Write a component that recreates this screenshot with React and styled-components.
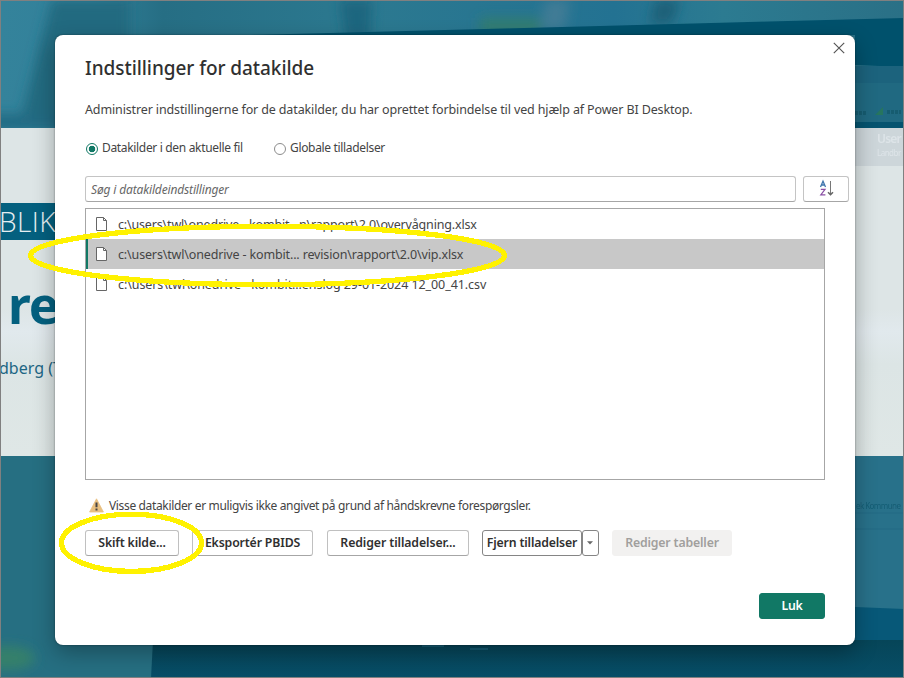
import React from "react";
import styled, { createGlobalStyle } from "styled-components";

const GlobalStyle = createGlobalStyle`
  *, *::before, *::after { box-sizing: border-box; }
  html, body { margin: 0; padding: 0; }
  body { width: 904px; height: 678px; overflow: hidden; font-family: "Noto Sans", "Open Sans", sans-serif; }
  button, input { font-family: inherit; margin: 0; padding: 0; }
`;

const Page = styled.main`
  position: relative;
  width: 904px;
  height: 678px;
  padding: 35px 49px 33px 55px;
  overflow: hidden;
  background: #266f82;
`;

const PageFrame = styled.div`
  position: absolute;
  inset: 0;
  border: 1px solid #808080;
  pointer-events: none;
`;

const Backdrop = styled.div`
  position: absolute;
  inset: 0;
  padding-top: 128px;
`;

const Scenery = styled.svg`
  position: absolute;
  inset: 0;
  display: block;
`;

const Band = styled.section`
  position: relative;
  height: 328px;
  padding-top: 75px;
  background: linear-gradient(180deg, #dde5e6 0%, #dde5e6 55%, #e1e9ed 62%, #dce5e5 72%, #dfe7e6 100%);
`;

const BandPanel = styled.div`
  position: absolute;
  top: 0;
  right: 0;
  display: flex;
  flex-direction: column;
  width: 54px;
  height: 38px;
  padding: 2px 0 0 27px;
  background: #cdd6da;
  color: #dde4e8;
  white-space: nowrap;
  filter: blur(0.6px);
`;

const PanelTitle = styled.span`
  font-size: 12px;
  font-weight: 600;
  line-height: 17px;
  letter-spacing: -0.8px;
`;

const PanelNote = styled.span`
  font-size: 8px;
  line-height: 11px;
  letter-spacing: -0.5px;
`;

const BandTag = styled.div`
  width: 60px;
  height: 37px;
  background: #04607f;
  color: #e6eef1;
  font-family: "Open Sans", sans-serif;
  font-weight: 300;
  font-size: 28px;
  line-height: 36px;
  letter-spacing: 0.4px;
  text-indent: -1px;
  white-space: nowrap;
`;

const BandHeading = styled.div`
  width: 80px;
  height: 70px;
  padding-left: 8px;
  color: #04607f;
  font-weight: 700;
  font-size: 51px;
  line-height: 70px;
  margin-top: 29px;
  letter-spacing: -1px;
`;

const BandName = styled.div`
  width: 80px;
  height: 26px;
  margin-top: 16px;
  color: #1c6684;
  font-size: 16px;
  line-height: 26px;
  letter-spacing: 0px;
  white-space: nowrap;
  text-indent: -1px;
`;

const Dialog = styled.section`
  position: relative;
  display: flex;
  flex-direction: column;
  width: 800px;
  height: 610px;
  padding: 0 30px;
  border-radius: 8px;
  background: #fff;
  color: #444;
  box-shadow: 0 0 2px rgba(0, 0, 0, 0.45), 0 8px 22px rgba(0, 0, 0, 0.3);
`;

const CloseButton = styled.button`
  position: absolute;
  top: 7px;
  right: 10px;
  width: 12px;
  height: 12px;
  border: 0;
  background: none;
  svg { display: block; }
`;

const Title = styled.h1`
  margin: 18px 0 0;
  height: 30px;
  color: #303030;
  font-size: 19px;
  font-weight: 500;
  line-height: 30px;
  letter-spacing: ${(p) => p.$track}px;
  white-space: nowrap;
`;

const Text = styled.span`
  color: #444;
  font-size: ${(p) => (p.$small ? 12 : 12.5)}px;
  line-height: 20px;
  letter-spacing: ${(p) => p.$track || 0}px;
  white-space: nowrap;
`;

const Intro = styled.div`
  display: flex;
  height: 20px;
  margin-top: 17px;
`;

const RadioGroup = styled.div`
  display: flex;
  height: 20px;
  margin-top: 18px;
`;

const Radio = styled.label`
  display: flex;
  width: ${(p) => p.$width}px;
  gap: 4px;
`;

const RadioMark = styled.span`
  width: 12px;
  height: 12px;
  margin: 5px 0 0 1px;
  border: 1px solid ${(p) => (p.$checked ? "#117865" : "#8c8c8c")};
  border-radius: 50%;
  background: ${(p) => (p.$checked ? "radial-gradient(circle, #117865 0 3px, #fff 3.6px)" : "#fff")};
`;

const SearchRow = styled.div`
  display: flex;
  gap: 7px;
  width: 764px;
  height: 26px;
  margin-top: 18px;
`;

const SearchField = styled.div`
  display: flex;
  align-items: center;
  width: 711px;
  padding-left: 5px;
  border: 1px solid #c4c4c4;
  border-bottom-color: #a6a6a6;
  border-radius: 3px;
  color: #666;
  font-size: 12px;
  font-style: italic;
  letter-spacing: ${(p) => p.$track}px;
  white-space: nowrap;
`;

const SortButton = styled.button`
  width: 46px;
  border: 1px solid #c4c4c4;
  border-bottom-color: #a6a6a6;
  border-radius: 3px;
  background: #fff;
  svg { display: block; margin: -2px 0 0 15px; }
`;

const SourceList = styled.ul`
  width: 740px;
  height: 272px;
  margin: 6px 0 0;
  padding: 0;
  list-style: none;
  border: 1px solid #a6a6a6;
`;

const SourceRow = styled.li`
  display: flex;
  align-items: center;
  height: 30px;
  padding-left: 7px;
  border-left: 2px solid ${(p) => (p.$selected ? "#117865" : "transparent")};
  background: ${(p) => (p.$selected ? "#c8c8c8" : "#fff")};
  svg { display: block; flex: none; margin-right: 10px; }
  ${Text} { padding-top: 2px; }
`;

const Warning = styled.div`
  display: flex;
  height: 20px;
  margin-top: 16px;
  padding-left: 4px;
  gap: 5px;
  svg { display: block; margin-top: 2px; }
`;

const Actions = styled.div`
  display: flex;
  height: 26px;
  margin-top: 14px;
`;

const Button = styled.button`
  width: ${(p) => p.$width}px;
  height: 26px;
  margin-right: ${(p) => p.$gap || 0}px;
  border: 1px solid ${(p) => (p.$strong ? "#858585" : "#c0c0c0")};
  border-bottom-color: ${(p) => (p.$strong ? "#858585" : "#a6a6a6")};
  border-radius: 3px;
  background: #fff;
  color: #303030;
  font-size: 12.3px;
  font-weight: 600;
  line-height: 22px;
  letter-spacing: ${(p) => p.$track || 0}px;
  white-space: nowrap;
  text-align: center;

  &:disabled { border-color: #f2f1f0; background: #f2f1f0; color: #a19f9d; }
  svg { display: block; margin: 0 auto; }
`;

const MenuButton = styled(Button)`
  padding: 0 2px 0 0;
`;

const PrimaryButton = styled(Button)`
  border-color: #117865;
  background: #117865;
  color: #fff;
`;

const Footer = styled.footer`
  display: flex;
  justify-content: flex-end;
  margin-top: 37px;
`;

const Annotations = styled.svg`
  position: absolute;
  inset: 0;
  pointer-events: none;
`;

function FileIcon() {
  return (
    <svg width="13" height="16" viewBox="0 0 13 16" fill="#fff" stroke="#666" strokeWidth="1">
      <path d="M1.5 1.5H8.5L11.5 4.5V14.5H1.5Z" />
      <path d="M8.5 1.5V4.5H11.5" fill="none" />
    </svg>
  );
}

function SortIcon() {
  return (
    <svg width="16" height="18" viewBox="0 0 16 18" fill="none">
      <path d="M1.5 8L4 2.2L6.5 8M2.3 6H5.7" stroke="#3f76ad" strokeWidth="1.3" />
      <path d="M1.8 10.4H6L1.8 15.8H6.4" stroke="#8a50a5" strokeWidth="1.2" />
      <path d="M11.5 2V15.5" stroke="#777" strokeWidth="1" />
      <path d="M9 13.2L11.5 15.6L14 13.2" stroke="#666" strokeWidth="1.5" />
    </svg>
  );
}

function WarningIcon() {
  return (
    <svg width="15" height="15" viewBox="0 0 15 15">
      <path d="M7.5 0.8L14.4 14H0.6Z" fill="#e8bf80" stroke="#e8bf80" strokeWidth="0.8" strokeLinejoin="round" />
      <path d="M7.5 4.5V9.3M7.5 10.6V12.6" stroke="#444" strokeWidth="2" />
    </svg>
  );
}

function BackdropScenery() {
  return (
    <Scenery width="904" height="678">
      <defs>
        <filter id="soft" x="-50%" y="-50%" width="200%" height="200%"><feGaussianBlur stdDeviation="6" /></filter>
        <filter id="slight"><feGaussianBlur stdDeviation="0.7" /></filter>
        <linearGradient id="top" x1="0" x2="1">
          <stop offset="0" stopColor="#34839b" />
          <stop offset="0.1" stopColor="#32809a" />
          <stop offset="0.18" stopColor="#266e84" />
          <stop offset="0.4" stopColor="#2c7990" />
          <stop offset="0.68" stopColor="#237292" />
          <stop offset="0.8" stopColor="#2c7b91" />
          <stop offset="1" stopColor="#2a7086" />
        </linearGradient>
        <linearGradient id="floor" x1="0" y1="0" x2="0" y2="1">
          <stop offset="0" stopColor="#064558" />
          <stop offset="1" stopColor="#074e68" />
        </linearGradient>
      </defs>
      <rect width="904" height="128" fill="url(#top)" />
      <g filter="url(#soft)">
        <path d="M52 0H130V45H60V130H18Z" fill="#236b80" />
        <rect x="-10" y="114" width="80" height="16" fill="#216b83" />
        <path d="M340 0H372L370 40H345Z" fill="#1f667f" />
        <path d="M480 18H540V34H480Z" fill="#317d70" />
        <path d="M545 0H570L565 30H540Z" fill="#3f7c95" />
        <path d="M655 0H680L672 24H650Z" fill="#1c6078" />
      </g>
      <path d="M250 35L600 26L904 18V67L855 65V35Z" fill="#06516c" filter="url(#slight)" />
      <rect x="855" y="66" width="49" height="17" fill="#1c637d" />
      <rect x="855" y="83" width="49" height="39" fill="#206981" />
      <rect x="855" y="122" width="49" height="6" fill="#05536f" />
      <g filter="url(#slight)">
        <path d="M875 115L883 107V115Z" fill="#27755f" />
        <path d="M855 113H867M887 112H901" stroke="#165b70" strokeWidth="4" strokeDasharray="3 1" />
      </g>
      <path d="M855 456H904V611H855Z" fill="#28718a" />
      <path d="M855 513H904M855 529H904" stroke="#236b84" />
      <path d="M855 607L904 609V648H855Z" fill="#075878" />
      <path d="M153 640H904V678H151Z" fill="url(#floor)" />
      <path d="M422 646H444M470 649H488" stroke="#155d75" strokeWidth="2" />
      <ellipse cx="8" cy="658" rx="27" ry="12" fill="#35806b" filter="url(#soft)" />
      <text x="856" y="509" fill="#165d74" fontSize="8" textLength="45" filter="url(#slight)">ek Kommune</text>
    </Scenery>
  );
}

const SOURCES = [
  { path: "c:\\users\\twl\\onedrive - kombit...n\\rapport\\2.0\\overvågning.xlsx", track: -0.17 },
  { path: "c:\\users\\twl\\onedrive - kombit... revision\\rapport\\2.0\\vip.xlsx", track: -0.15, selected: true },
  { path: "c:\\users\\twl\\onedrive - kombit...enslog 29-01-2024 12_00_41.csv", track: -0.08 },
];

export default function App() {
  return (
    <Page>
      <GlobalStyle />
      <Backdrop>
        <BackdropScenery />
        <Band>
          <BandPanel>
            <PanelTitle>User</PanelTitle>
            <PanelNote>Landbr</PanelNote>
          </BandPanel>
          <BandTag>BLIK</BandTag>
          <BandHeading>re</BandHeading>
          <BandName>dberg (T</BandName>
        </Band>
      </Backdrop>
      <Dialog role="dialog">
        <CloseButton aria-label="Luk dialog">
          <svg width="12" height="12" viewBox="0 0 12 12">
            <path d="M0.8 0.8L11.2 11.2M11.2 0.8L0.8 11.2" stroke="#555" strokeWidth="1.15" />
          </svg>
        </CloseButton>
        <Title $track={-0.06}>Indstillinger for datakilde</Title>
        <Intro>
          <Text $track={-0.13}>Administrer indstillingerne for de datakilder, du har oprettet forbindelse til ved hjælp af Power BI Desktop.</Text>
        </Intro>
        <RadioGroup>
          <Radio $width={188}><RadioMark $checked /><Text $small $track={-0.33}>Datakilder i den aktuelle fil</Text></Radio>
          <Radio $width={130}><RadioMark /><Text $small $track={-0.33}>Globale tilladelser</Text></Radio>
        </RadioGroup>
        <SearchRow>
          <SearchField $track={-0.15}>Søg i datakildeindstillinger</SearchField>
          <SortButton aria-label="Sorter"><SortIcon /></SortButton>
        </SearchRow>
        <SourceList>
          {SOURCES.map((s) => (
            <SourceRow key={s.path} $selected={s.selected}>
              <FileIcon />
              <Text $track={s.track}>{s.path}</Text>
            </SourceRow>
          ))}
        </SourceList>
        <Warning>
          <WarningIcon />
          <Text $small $track={-0.35}>Visse datakilder er muligvis ikke angivet på grund af håndskrevne forespørgsler.</Text>
        </Warning>
        <Actions>
          <Button $width={94} $gap={13} $track={-0.15}>Skift kilde...</Button>
          <Button $width={121} $gap={14} $track={-0.15}>Eksportér PBIDS</Button>
          <Button $width={142} $gap={13} $track={-0.1}>Rediger tilladelser...</Button>
          <Button $width={100} $strong $track={-0.17}>Fjern tilladelser</Button>
          <MenuButton $width={17} $gap={13} $strong aria-label="Flere valg">
            <svg width="6" height="4" viewBox="0 0 6 4"><path d="M0 0.3H6L3 3.5Z" fill="#666" /></svg>
          </MenuButton>
          <Button $width={120} $track={-0.16} disabled>Rediger tabeller</Button>
        </Actions>
        <Footer>
          <PrimaryButton $width={66} $track={-0.3}>Luk</PrimaryButton>
        </Footer>
      </Dialog>
      <Annotations width="904" height="678" fill="none" stroke="#fff200" strokeWidth="5.3" shapeRendering="crispEdges">
        <ellipse cx="267.5" cy="255.5" rx="237" ry="29.2" />
        <ellipse cx="131.5" cy="542.8" rx="70" ry="28.6" />
      </Annotations>
      <PageFrame />
    </Page>
  );
}
